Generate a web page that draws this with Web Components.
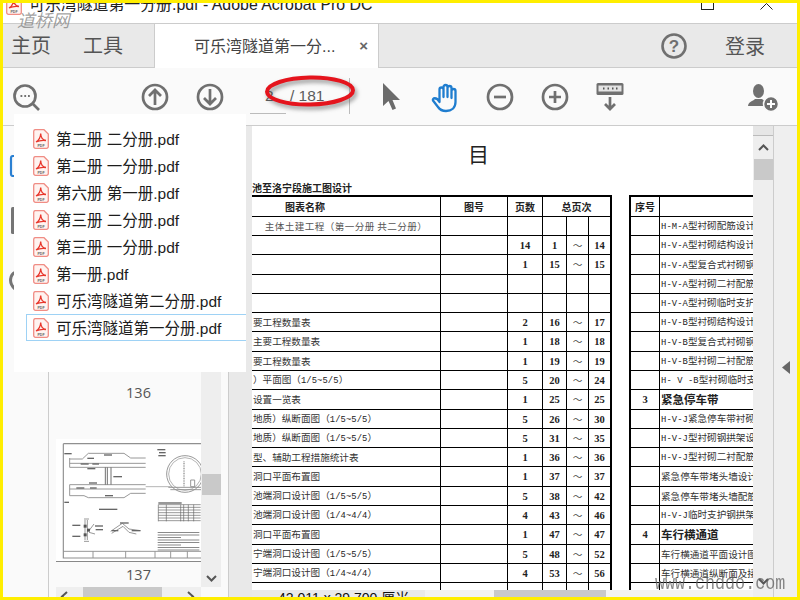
<!DOCTYPE html>
<html lang="zh">
<head>
<meta charset="utf-8">
<title>Acrobat</title>
<style>
    html, body { margin: 0; padding: 0; background: #fff; }
    body { font-family: "Liberation Sans", "Noto Sans CJK SC", sans-serif; }
</style>
</head>
<body>
<app-frame></app-frame>
<script>
const CJK = '"Liberation Sans", "Noto Sans CJK SC", sans-serif';
const ICON_GRAY = '#707070';

class PdfIcon extends HTMLElement {
    connectedCallback() {
        this.attachShadow({ mode: 'open' });
        this.shadowRoot.innerHTML = `
        <style>
            :host { display: block; width: 16px; height: 20px; }
            svg { display: block; }
        </style>
        <svg width="16" height="20" viewBox="0 0 16 20">
            <path d="M2 .7H11L15.3 5V17.5a1.8 1.8 0 0 1-1.8 1.8H2.5A1.8 1.8 0 0 1 .7 17.5V2.5A1.8 1.8 0 0 1 2 .7Z" fill="#fff3f0" stroke="#f08d85" stroke-width="1.3"/>
            <path d="M3 13C5.5 11.5 7.6 8 7.7 4.6 7.8 8 9.5 11 13 11.5 9.5 11 6 11.5 3 13Z" fill="none" stroke="#e8372c" stroke-width="1.3"/>
            <text x="8" y="17.5" font-size="3.6" font-weight="700" text-anchor="middle" fill="#666" font-family="Liberation Sans">PDF</text>
        </svg>`;
    }
}
customElements.define('pdf-icon', PdfIcon);

class TitleBar extends HTMLElement {
    connectedCallback() {
        this.attachShadow({ mode: 'open' });
        this.shadowRoot.innerHTML = `
        <style>
            :host { display: flex; height: 20px; background: #fff; border-bottom: 1px solid #ccc; overflow: hidden; position: relative; flex: none; }
            .icon { margin: -8px 0 0 3px; width: 16px; flex: none; }
            .text { margin: -7px 0 0 7px; font: 15.9px/18px ${CJK}; color: #222; white-space: nowrap; }
            .max { position: absolute; left: 698px; top: -6px; width: 11px; height: 11px; border: 1px solid #222; }
            .up { position: absolute; left: 757px; top: 0; }
        </style>
        <pdf-icon class="icon"></pdf-icon>
        <div class="text">可乐湾隧道第一分册.pdf - Adobe Acrobat Pro DC</div>
        <div class="max"></div>
        <svg class="up" width="13" height="7" viewBox="0 0 13 7"><path d="M.5 6.5 6.5.5l6 6" fill="none" stroke="#222"/></svg>`;
    }
}
customElements.define('title-bar', TitleBar);

class TabBar extends HTMLElement {
    connectedCallback() {
        this.attachShadow({ mode: 'open' });
        this.shadowRoot.innerHTML = `
        <style>
            :host { display: flex; height: 43px; background: #e9e9e9; border-bottom: 1px solid #ccc; flex: none; font-family: ${CJK}; color: #555; }
            .home { width: 152px; flex: none; display: flex; align-items: center; padding: 0 0 2px 8px; box-sizing: border-box; gap: 32px; font-size: 20px; border-right: 1px solid #ccc; }
            .tab { width: 224px; height: 44px; flex: none; box-sizing: border-box; display: flex; align-items: center; padding: 0 0 2px 39px; background: #fff; border-right: 1px solid #ccc; font-size: 16px; color: #444; white-space: nowrap; }
            .close { margin-left: 24px; font: bold 15px ${CJK}; color: #666; }
            .right { margin-left: auto; display: flex; align-items: center; padding-right: 32px; }
            .login { margin-left: 38px; font-size: 20px; }
            svg { display: block; }
        </style>
        <div class="home"><span>主页</span><span>工具</span></div>
        <div class="tab"><span>可乐湾隧道第一分...</span><span class="close">×</span></div>
        <div class="right">
            <svg width="26" height="26" viewBox="0 0 26 26">
                <circle cx="13" cy="13" r="11.5" fill="none" stroke="${ICON_GRAY}" stroke-width="2.6"/>
                <text x="13" y="19" font-size="17" font-weight="700" text-anchor="middle" fill="${ICON_GRAY}" font-family="Liberation Sans">?</text>
            </svg>
            <span class="login">登录</span>
        </div>`;
    }
}
customElements.define('tab-bar', TabBar);

class ToolIcon extends HTMLElement {
    connectedCallback() {
        const gap = this.getAttribute('gap') || 0;
        const name = this.getAttribute('name');
        const ring = `<circle cx="15" cy="15" r="12" fill="none" stroke="${ICON_GRAY}" stroke-width="2.7"/>`;
        const line = `fill="none" stroke="${ICON_GRAY}" stroke-width="2.7"`;
        const icons = {
            search: `<circle cx="14" cy="14" r="10.5" fill="none" stroke="${ICON_GRAY}" stroke-width="2.7"/>
                <path d="M21.5 21.5 28 28" ${line}/>
                <path d="M9.5 14h1.8M13.3 14h1.8M17 14h1.8" fill="none" stroke="${ICON_GRAY}" stroke-width="2"/>`,
            up: `${ring}<path d="M15 23V8M9 14l6-6 6 6" ${line}/>`,
            down: `${ring}<path d="M15 7v15M9 16l6 6 6-6" ${line}/>`,
            minus: `${ring}<path d="M9 15h12" ${line}/>`,
            plus: `${ring}<path d="M9 15h12M15 9v12" ${line}/>`,
            cursor: `<path d="M6 1V24L11.5 19 15.5 28 19 26.5 15.5 18H23Z" fill="#6b6b6b"/>`,
            hand: `<path d="M9.5 20V7.5a2 2 0 0 1 4 0V15 5a2 2 0 0 1 4 0V15 6a2 2 0 0 1 4 0V16 9a2 2 0 0 1 4 0V20c0 6-4 9-9.5 9-4 0-6-1-8-4L3 18.5c-1-2.5 3.5-4 6.5 1.5Z" fill="none" stroke="#1f7dcf" stroke-width="2.3" stroke-linejoin="round"/>`,
            keys: `<rect x="1.5" y="1" width="27" height="12" rx="1.5" fill="${ICON_GRAY}"/>
                <rect x="3.5" y="3.5" width="23" height="6" fill="#e4e4e4"/>
                <path d="M8 6.5h1.5M12.5 6.5H14M17 6.5h1.5M21 6.5h1.5" stroke="#555" stroke-width="2"/>
                <path d="M15 15V27M10 22l5 5 5-5" ${line}/>`,
            user: `<ellipse cx="10.5" cy="9" rx="5.5" ry="7" fill="${ICON_GRAY}"/>
                <path d="M0 24c0-4 5-5 7-7h7c2 2 5 3 6 5l-2 2Z" fill="${ICON_GRAY}"/>
                <circle cx="23" cy="22" r="7.5" fill="${ICON_GRAY}" stroke="#fafafa" stroke-width="1.5"/>
                <path d="M19 22h8M23 18v8" stroke="#fff" stroke-width="2"/>`
        };
        this.attachShadow({ mode: 'open' });
        this.shadowRoot.innerHTML = `
        <style>
            :host { display: block; width: 30px; height: 30px; margin-left: ${gap}px; flex: none; }
            svg { display: block; overflow: visible; }
        </style>
        <svg width="30" height="30" viewBox="0 0 30 30">${icons[name]}</svg>`;
    }
}
customElements.define('tool-icon', ToolIcon);

class ToolBar extends HTMLElement {
    connectedCallback() {
        this.attachShadow({ mode: 'open' });
        this.shadowRoot.innerHTML = `
        <style>
            :host { display: flex; align-items: center; height: 57px; background: #fafafa; border-bottom: 1px solid #ccc; padding: 0 0 0 8px; flex: none; }
            .page { margin-left: 25px; width: 100px; height: 36px; flex: none; box-sizing: border-box; border-right: 1px solid #bbb; display: flex; font: 15.5px ${CJK}; color: #5c5c5c; margin-top: -2px; }
            .input { width: 36px; height: 36px; box-sizing: border-box; border-bottom: 1px solid #bbb; padding: 9px 17px 0 15px; }
            .total { padding: 9px 0 0 4px; white-space: nowrap; }
        </style>
        <tool-icon name="search"></tool-icon>
        <tool-icon name="up" gap="99"></tool-icon>
        <tool-icon name="down" gap="25"></tool-icon>
        <div class="page"><div class="input">2</div><div class="total">/ 181</div></div>
        <tool-icon name="cursor" gap="27"></tool-icon>
        <tool-icon name="hand" gap="23"></tool-icon>
        <tool-icon name="minus" gap="25"></tool-icon>
        <tool-icon name="plus" gap="25"></tool-icon>
        <tool-icon name="keys" gap="25"></tool-icon>
        <tool-icon name="user" gap="123"></tool-icon>`;
    }
}
customElements.define('tool-bar', ToolBar);

class NavRail extends HTMLElement {
    connectedCallback() {
        this.attachShadow({ mode: 'open' });
        this.shadowRoot.innerHTML = `
        <style>
            :host { display: flex; flex-direction: column; width: 46px; flex: none; box-sizing: border-box; background: #fafafa; border-right: 1px solid #ccc; padding: 29px 0 0 4px; }
            svg { display: block; }
        </style>
        <svg width="20" height="22" viewBox="0 0 20 22"><rect x="4" y="1" width="14" height="20" rx="2" fill="none" stroke="#2b80d2" stroke-width="2.2"/></svg>
        <svg width="20" height="27" viewBox="0 0 20 27" style="margin-top:30px"><rect x="4" y="0" width="14" height="27" rx="1.5" fill="#757575"/></svg>
        <svg width="20" height="19" viewBox="0 0 20 19" style="margin-top:37px"><path d="M9 1C3 3 1 12 8 18" fill="none" stroke="#757575" stroke-width="3"/></svg>`;
    }
}
customElements.define('nav-rail', NavRail);

class ThumbPreview extends HTMLElement {
    connectedCallback() {
        const tiny = [[46,57,22],[165,61,24],[115,71,20],[95,88,24],[130,88,20],[115,102,24],[193,126,26],[120,145,24],[82,160,24],[123,160,20],[168,183,24],[46,203,14],
            [325,45,24],[330,54,20],[328,63,22],[328,205,70],[150,224,55],[70,272,24],[70,305,24],[138,274,24],[140,285,22],[213,265,26],[248,288,26],[188,288,20]];
        let marks = tiny.map(t => `<rect x="${t[0]}" y="${t[1]}" width="${t[2]}" height="4" fill="#666"/>`).join('');
        for (let i = 0; i < 8; i++) {
            const w = i % 3 === 2 ? 70 : 125;
            marks += `<rect x="326" y="${294 + i * 7.5}" width="${w}" height="3" fill="#8a8a8a"/>`;
        }
        let grid = '';
        for (let y = 212; y <= 262; y += 8) grid += `<path d="M328 ${y}H455" stroke="#666" stroke-width="2"/>`;
        for (const x of [328, 352, 395, 404, 418, 434]) grid += `<path d="M${x} 212V262" stroke="#666" stroke-width="2"/>`;
        this.attachShadow({ mode: 'open' });
        this.shadowRoot.innerHTML = `
        <style>
            :host { display: block; width: 145px; height: 123px; background: #fff; flex: none; border-bottom: 1px solid #888; box-sizing: border-box; }
            svg { display: block; }
        </style>
        <svg width="145" height="122" viewBox="21 15 435 366">
            <g fill="none" stroke="#909090" stroke-width="2.8">
                <path d="M43 29H456M43 29V372H456" stroke-width="3.5"/>
                <path d="M62 75H100L118 58H225L245 72H290M62 88H290M62 100H290M62 72V100"/>
                <path d="M62 152H290M62 165H290M62 185H105L118 191H225L245 178H290M62 152V185"/>
                <path d="M169 100V152M175 100V152M186 100V152" stroke="#666"/>
                <circle cx="408" cy="120" r="55"/>
                <circle cx="408" cy="120" r="49" stroke-width="2"/>
                <path d="M358 160H456M364 167H456"/>
                <path d="M405 82V158" stroke-dasharray="3 2" stroke="#666"/>
                <path d="M425 138h12v20h-12z"/>
                <path d="M43 352H456M132 352V372M230 352V372M318 352V372M365 352V372M415 352V372"/>
                <path d="M108 258V318M115 258V318M105 255H120M105 322H120M120 290L135 270M120 295L138 300"/>
                <path d="M185 292 220 268 240 285 275 290M188 298 222 277 240 295 262 300"/>
                <path d="M290 158H365" stroke-width="2"/>
            </g>
            <rect x="104" y="272" width="9" height="9" fill="#555"/>
            <rect x="114" y="284" width="9" height="9" fill="#555"/>
            <rect x="104" y="298" width="9" height="9" fill="#555"/>
            ${grid}
            ${marks}
        </svg>`;
    }
}
customElements.define('thumb-preview', ThumbPreview);

class ThumbPanel extends HTMLElement {
    connectedCallback() {
        this.attachShadow({ mode: 'open' });
        this.shadowRoot.innerHTML = `
        <style>
            :host { display: grid; grid-template-columns: 145px 20px; grid-template-rows: 461px 10px; width: 180px; flex: none; box-sizing: border-box; padding-left: 7px; background: #fafafa; border-right: 1px solid #ccc; font: 14.5px "Open Sans", sans-serif; color: #555; }
            .list { display: flex; flex-direction: column; justify-content: flex-end; min-width: 0; overflow: visible; }
            .label { height: 25px; line-height: 25px; width: 165px; text-align: center; flex: none; }
            .label.first { margin-bottom: 34px; }
            .vbar { display: flex; flex-direction: column; align-items: center; background: #eee; }
            .vthumb { margin-top: 348px; width: 19px; height: 21px; background: #c9c9c9; }
            .vbar svg { margin-top: auto; margin-bottom: 5px; }
            .hbar { background: #efefef; display: flex; overflow: hidden; }
            .hthumb { margin-left: 13px; width: 79px; height: 10px; background: #c9c9c9; }
            .hbar svg { flex: none; margin: 4px 0 0 4px; }
            .hbar svg:last-child { margin-left: 23px; }
            svg { display: block; }
        </style>
        <div class="list">
            <div class="label first">136</div>
            <thumb-preview></thumb-preview>
            <div class="label">137</div>
        </div>
        <div class="vbar">
            <div class="vthumb"></div>
            <svg width="11" height="7" viewBox="0 0 11 7"><path d="M1 1l4.5 4.5L10 1" fill="none" stroke="#555" stroke-width="2"/></svg>
        </div>
        <div class="hbar">
            <svg width="10" height="11" viewBox="0 0 10 11"><path d="M7 1 2 5.5l5 4.5" fill="none" stroke="#555" stroke-width="2"/></svg>
            <div class="hthumb"></div>
            <svg width="10" height="11" viewBox="0 0 10 11"><path d="M3 1l5 4.5L3 10" fill="none" stroke="#555" stroke-width="2"/></svg>
        </div>
        <div></div>`;
    }
}
customElements.define('thumb-panel', ThumbPanel);

class DocTable extends HTMLElement {
    set config(c) { this.cfg = c; this.render(); }

    cellText(text) {
        // latin pieces are set narrow and monospaced like the drawing's font
        return String(text).replace(/[A-Za-z0-9\/\-~ ]+/g, m => `<span class="m">${m}</span>`);
    }

    render() {
        const { widths, rows, heights } = this.cfg;
        const cols = widths.map(w => `<col style="width:${w}px">`).join('');
        const body = rows.map((r, i) => {
            const tds = r.map(c => {
                const cell = typeof c === 'object' ? c : { t: c };
                const cls = cell.c || '';
                const span = cell.s ? ` colspan="${cell.s}"` : '';
                return `<td class="${cls}"${span} style="height:${heights[i]}px">${cell.n ? cell.t : this.cellText(cell.t)}</td>`;
            }).join('');
            return `<tr>${tds}</tr>`;
        }).join('');
        const total = widths.reduce((a, b) => a + b, 0);
        this.shadowRoot.innerHTML = `
        <style>
            :host { display: block; flex: none; width: ${total}px; }
            table { table-layout: fixed; width: ${total}px; border-collapse: separate; border-spacing: 0; border-top: 2px solid #000; border-left: ${this.cfg.left ? '2px solid #000' : '0'}; box-sizing: border-box; font: 9.6px/11px "Noto Sans CJK SC", sans-serif; color: #333; }
            td { box-sizing: border-box; padding: 0; border-right: 1px solid #000; border-bottom: 1px solid #000; white-space: nowrap; overflow: hidden; }
            td:last-child { border-right: ${this.cfg.right ? '2px solid #000' : '1px solid #000'}; }
            .m { font: 8.8px "Liberation Mono", monospace; letter-spacing: .1px; color: #222; }
            .h { font-weight: 700; text-align: center; color: #222; font-size: 10px; }
            .name { padding-right: 82px; }
            .b { font-weight: 700; color: #222; padding-left: 1px; font-size: 11.5px; }
            .n { font: 700 10.5px "Liberation Serif", serif; text-align: center; color: #222; }
            .t { text-align: center; color: #444; }
            .center { text-align: center; color: #555; letter-spacing: .4px; }
            .l { padding-left: 1px; }
        </style>
        <table><colgroup>${cols}</colgroup>${body}</table>`;
    }

    connectedCallback() {
        if (!this.shadowRoot) this.attachShadow({ mode: 'open' });
    }
}
customElements.define('doc-table', DocTable);

class DocPage extends HTMLElement {
    connectedCallback() {
        this.attachShadow({ mode: 'open' });
        this.shadowRoot.innerHTML = `
        <style>
            :host { display: block; width: 501px; height: 464px; background: #fff; overflow: hidden; font-family: "Noto Sans CJK SC", sans-serif; color: #222; flex: none; }
            .title { height: 54px; padding-left: 216px; box-sizing: border-box; padding-top: 12px; font-size: 21px; line-height: 30px; }
            .sub { height: 15px; font: 700 10px/15px "Noto Sans CJK SC", sans-serif; }
            .tables { display: flex; gap: 17px; }
        </style>
        <div class="title">目</div>
        <div class="sub">池至洛宁段施工图设计</div>
        <div class="tables"><doc-table id="a"></doc-table><doc-table id="b"></doc-table></div>`;

        const heights = [20, 19, 19, 20, 19, 19, 19, 20, 19, 19, 20, 19, 19, 19, 20, 19, 19, 20, 19, 19, 19];
        const name = t => ({ t, c: 'l' });
        const nums = (p, a, b) => [{ t: p, c: 'n', n: 1 }, { t: a, c: 'n', n: 1 }, { t: '～', c: 't', n: 1 }, { t: b, c: 'n', n: 1 }];
        const left = [
            [{ t: '图表名称', c: 'h name' }, { t: '图号', c: 'h' }, { t: '页数', c: 'h' }, { t: '总页次', c: 'h', s: 3 }],
            [{ t: '主体土建工程（第一分册 共二分册）', c: 'center', n: 1 }, '', '', '', '', ''],
            ['', '', ...nums(14, 1, 14)],
            ['', '', ...nums(1, 15, 15)],
            ['', '', '', '', '', ''],
            ['', '', '', '', '', ''],
            [name('要工程数量表'), '', ...nums(2, 16, 17)],
            [name('主要工程数量表'), '', ...nums(1, 18, 18)],
            [name('要工程数量表'), '', ...nums(1, 19, 19)],
            [name('）平面图（1/5~5/5）'), '', ...nums(5, 20, 24)],
            [name('设置一览表'), '', ...nums(1, 25, 25)],
            [name('地质）纵断面图（1/5~5/5）'), '', ...nums(5, 26, 30)],
            [name('地质）纵断面图（1/5~5/5）'), '', ...nums(5, 31, 35)],
            [name('型、辅助工程措施统计表'), '', ...nums(1, 36, 36)],
            [name('洞口平面布置图'), '', ...nums(1, 37, 37)],
            [name('池端洞口设计图（1/5~5/5）'), '', ...nums(5, 38, 42)],
            [name('池端洞口设计图（1/4~4/4）'), '', ...nums(4, 43, 46)],
            [name('洞口平面布置图'), '', ...nums(1, 47, 47)],
            [name('宁端洞口设计图（1/5~5/5）'), '', ...nums(5, 48, 52)],
            [name('宁端洞口设计图（1/4~4/4）'), '', ...nums(4, 53, 56)],
            ['', '', '', '', '', '']
        ];
        const item = t => ['', { t, c: 'l' }];
        const right = [
            [{ t: '序号', c: 'h' }, ''],
            item('H-M-A型衬砌配筋设计图'),
            item('H-V-A型衬砌结构设计图'),
            item('H-V-A型复合式衬砌钢拱架'),
            item('H-V-A型衬砌二衬配筋图'),
            item('H-V-A型衬砌临时支护图'),
            item('H-V-B型衬砌结构设计图'),
            item('H-V-B型复合式衬砌钢拱架'),
            item('H-V-B型衬砌二衬配筋图'),
            item('H- V -B型衬砌临时支护图'),
            [{ t: 3, c: 'n', n: 1 }, { t: '紧急停车带', c: 'b' }],
            item('H-V-J紧急停车带衬砌图'),
            item('H-V-J型衬砌钢拱架设计图'),
            item('H-V-J型衬砌二衬配筋图'),
            item('紧急停车带堵头墙设计图'),
            item('紧急停车带堵头墙配筋图'),
            item('H-V-J临时支护钢拱架图'),
            [{ t: 4, c: 'n', n: 1 }, { t: '车行横通道', c: 'b' }],
            item('车行横通道平面设计图'),
            item('车行横通道纵断面及接头'),
            ['', '']
        ];
        this.shadowRoot.getElementById('a').config = { widths: [189, 67, 35, 24, 22, 23], rows: left, heights, right: true };
        this.shadowRoot.getElementById('b').config = { widths: [29, 200], rows: right, heights, left: true };
    }
}
customElements.define('doc-page', DocPage);

class DocScroll extends HTMLElement {
    connectedCallback() {
        this.attachShadow({ mode: 'open' });
        this.shadowRoot.innerHTML = `
        <style>
            :host { display: flex; flex-direction: column; align-items: center; width: 21px; flex: none; box-sizing: border-box; background: #eee; border-right: 1px solid #ccc; }
            .cap { width: 100%; height: 9px; background: #e6e6e6; border-bottom: 1px solid #bbb; flex: none; }
            .thumb { margin-top: 8px; width: 19px; height: 21px; background: #c9c9c9; }
            .up { margin-top: 8px; }
            .down { margin-top: auto; margin-bottom: 12px; }
            svg { display: block; flex: none; }
        </style>
        <div class="cap"></div>
        <svg class="up" width="11" height="7" viewBox="0 0 11 7"><path d="M1 6l4.5-4.5L10 6" fill="none" stroke="#555" stroke-width="2"/></svg>
        <div class="thumb"></div>
        <svg class="down" width="11" height="7" viewBox="0 0 11 7"><path d="M1 1l4.5 4.5L10 1" fill="none" stroke="#555" stroke-width="2"/></svg>`;
    }
}
customElements.define('doc-scroll', DocScroll);

class DocView extends HTMLElement {
    connectedCallback() {
        this.attachShadow({ mode: 'open' });
        this.shadowRoot.innerHTML = `
        <style>
            :host { display: flex; flex: none; width: 568px; background: #e9e9e9; box-sizing: border-box; padding-left: 23px; }
            .col { display: flex; flex-direction: column; width: 501px; flex: none; }
            .hbar { height: 7px; overflow: hidden; background: #f3f3f3; display: flex; flex: none; }
            .size { width: 173px; background: #eaeaea; flex: none; padding-left: 26px; box-sizing: border-box; font: 14px/16px "Liberation Sans", "Noto Sans CJK SC", sans-serif; color: #111; white-space: nowrap; overflow: hidden; }
            .thumb { margin-left: 69px; width: 112px; background: #c9c9c9; flex: none; }
            .pane { flex: 1; background: #efefef; display: flex; align-items: center; justify-content: center; }
            .pane svg { margin-top: 12px; display: block; }
        </style>
        <div class="col">
            <doc-page></doc-page>
            <div class="hbar"><div class="size">42.011 x 29.700 厘米</div><div class="thumb"></div></div>
        </div>
        <doc-scroll></doc-scroll>
        <div class="pane"><svg width="8" height="13" viewBox="0 0 8 13"><path d="M8 0V13L0 6.5Z" fill="#666"/></svg></div>`;
    }
}
customElements.define('doc-view', DocView);

class FileRow extends HTMLElement {
    connectedCallback() {
        this.attachShadow({ mode: 'open' });
        const on = this.hasAttribute('active');
        this.shadowRoot.innerHTML = `
        <style>
            :host { display: flex; align-items: center; gap: 7px; height: 27px; padding-left: 6px; box-sizing: border-box; border: 1px solid ${on ? '#9ed2f5' : 'transparent'}; border-right: 0; color: #1c1c1c; font: 15.5px ${CJK}; white-space: nowrap; }
            .name { margin-top: -2px; }
        </style>
        <pdf-icon></pdf-icon>
        <div class="name"><slot></slot></div>`;
    }
}
customElements.define('file-row', FileRow);

class FilePopup extends HTMLElement {
    connectedCallback() {
        this.attachShadow({ mode: 'open' });
        this.shadowRoot.innerHTML = `
        <style>
            :host { position: absolute; left: 11px; top: 111px; width: 232px; height: 258px; box-sizing: border-box; background: #fff; padding: 11px 0 0 12px; z-index: 2; }
        </style>
        <slot></slot>`;
    }
}
customElements.define('file-popup', FilePopup);

class RedRing extends HTMLElement {
    connectedCallback() {
        this.attachShadow({ mode: 'open' });
        this.shadowRoot.innerHTML = `
        <style>
            :host { position: absolute; left: 255px; top: 68px; z-index: 3; }
            svg { display: block; filter: drop-shadow(2px 3px 2px rgba(70,70,70,.55)); overflow: visible; }
        </style>
        <svg width="100" height="40" viewBox="0 0 100 40">
            <ellipse cx="52" cy="20" rx="43" ry="13.5" fill="none" stroke="#e5141d" stroke-width="4" transform="rotate(-1 52 20)"/>
        </svg>`;
    }
}
customElements.define('red-ring', RedRing);

class WaterMark extends HTMLElement {
    connectedCallback() {
        const x = this.getAttribute('x'), y = this.getAttribute('y');
        this.attachShadow({ mode: 'open' });
        this.shadowRoot.innerHTML = `
        <style>
            :host { position: absolute; left: ${x}px; top: ${y}px; z-index: 4; white-space: nowrap; pointer-events: none; }
            :host([kind="cn"]) { font: italic 17.5px/20px "Noto Sans CJK SC", sans-serif; color: rgba(120,120,120,.7); }
            :host([kind="en"]) { font: 16.7px/20px "Liberation Mono", monospace; color: rgba(95,95,95,.75); transform: scaleY(1.25); transform-origin: top left; }
        </style>
        <slot></slot>`;
    }
}
customElements.define('water-mark', WaterMark);

class AppFrame extends HTMLElement {
    connectedCallback() {
        this.attachShadow({ mode: 'open' });
        this.shadowRoot.innerHTML = `
        <style>
            :host { display: block; width: 800px; height: 600px; overflow: hidden; }
            .frame { position: relative; width: 800px; height: 600px; box-sizing: border-box; border: 3px solid #ffee00; background: #fff; display: flex; flex-direction: column; overflow: hidden; }
            .main { display: flex; height: 471px; flex: none; }
        </style>
        <div class="frame">
            <title-bar></title-bar>
            <tab-bar></tab-bar>
            <tool-bar></tool-bar>
            <div class="main">
                <nav-rail></nav-rail>
                <thumb-panel></thumb-panel>
                <doc-view></doc-view>
            </div>
            <file-popup>
                <file-row>第二册 二分册.pdf</file-row>
                <file-row>第二册 一分册.pdf</file-row>
                <file-row>第六册 第一册.pdf</file-row>
                <file-row>第三册 二分册.pdf</file-row>
                <file-row>第三册 一分册.pdf</file-row>
                <file-row>第一册.pdf</file-row>
                <file-row>可乐湾隧道第二分册.pdf</file-row>
                <file-row active>可乐湾隧道第一分册.pdf</file-row>
            </file-popup>
            <red-ring></red-ring>
            <water-mark kind="cn" x="14" y="7">道桥网</water-mark>
            <water-mark kind="en" x="652" y="568">www.chddo.com</water-mark>
        </div>`;
    }
}
customElements.define('app-frame', AppFrame);
</script>
</body>
</html>
